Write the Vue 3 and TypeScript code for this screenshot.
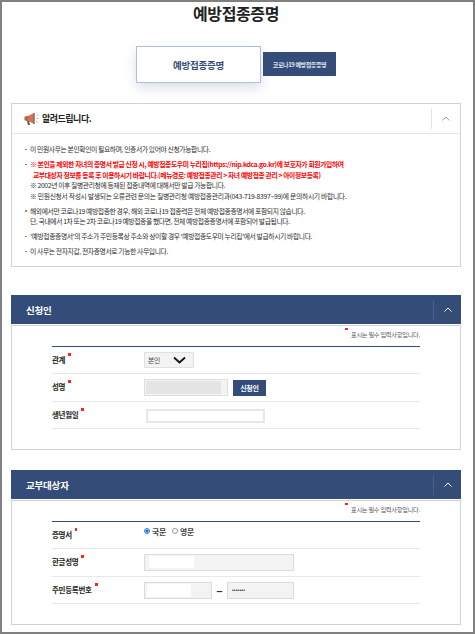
<script setup lang="ts">
interface NoticeLine { text: string; cls?: string }
const notices: NoticeLine[][] = [
  [{ text: '이 민원사무는 본인확인이 필요하며, 인증서가 있어야 신청가능합니다.' }],
  [
    { text: '※ 본인을 제외한 자녀의 증명서 발급 신청 시, 예방접종도우미 누리집(https://nip.kdca.go.kr)에 보호자가 회원가입하여', cls: 'red' },
    { text: '교부대상자 정보를 등록 후 이용하시기 바랍니다.(메뉴경로: 예방접종관리 > 자녀 예방접종 관리 > 아이정보등록)', cls: 'red ind' },
    { text: '※ 2002년 이후 질병관리청에 등재된 접종내역에 대해서만 발급 가능합니다.' },
    { text: '※ 민원신청서 작성시 발생되는 오류관련 문의는 질병관리청 예방접종관리과(043-719-8397~99)에 문의하시기 바랍니다.', cls: 'wide-line' },
  ],
  [
    { text: '해외에서만 코로나19 예방접종한 경우, 해외 코로나19 접종력은 전체 예방접종증명서에 포함되지 않습니다.' },
    { text: '단, 국내에서 1차 또는 2차 코로나19 예방접종을 했다면, 전체 예방접종증명서에 포함되어 발급됩니다.' },
  ],
  [{ text: "'예방접종증명서'의 주소가 주민등록상 주소와 상이할 경우 '예방접종도우미 누리집'에서 발급하시기 바랍니다." }],
  [{ text: '이 사무는 전자지갑, 전자증명서로 기능한 사무입니다.' }],
]
</script>

<template>
  <div class="page">
    <main class="content">
      <h1 class="title">예방접종증명</h1>
      <div class="tabs">
        <div class="tab active">예방접종증명</div>
        <div class="tab other">코로나19 예방접종증명</div>
      </div>

      <section class="notice">
        <header class="notice-head">
          <svg class="mega" viewBox="0 0 18 14" width="18" height="14">
            <path d="M4 4h3v5H4z" fill="#7d7d7d" />
            <path d="M2.500 4.500h2v4h-2z" fill="#c9553a" />
            <path d="M6 4l6-3v11L6 9z" fill="#e0704a" />
            <path d="M11.500 1h1.200v11h-1.200z" fill="#666" />
            <path d="M5 9h2l1 4H6z" fill="#555" />
            <path d="M14 3.500l2-1M14.500 6.500h2.500M14 9.500l2 1" stroke="#bbb" stroke-width="0.800" fill="none" />
          </svg>
          <span class="notice-title">알려드립니다.</span>
          <div class="notice-toggle">
            <svg viewBox="0 0 8 5" width="8" height="5"><path d="M0.500 4.500L4 1l3.500 3.500" fill="none" stroke="#8a8a8a" stroke-width="0.800" /></svg>
          </div>
        </header>
        <ul class="notice-list">
          <li v-for="(group, i) in notices" :key="i">
            <p v-for="(line, j) in group" :key="j" :class="line.cls">{{ line.text }}</p>
          </li>
        </ul>
      </section>

      <section class="panel first">
        <header class="panel-head">
          <span>신청인</span>
          <div class="panel-toggle">
            <svg viewBox="0 0 8 5" width="8" height="5"><path d="M0.500 4.500L4 1l3.500 3.500" fill="none" stroke="#fff" stroke-width="1" /></svg>
          </div>
        </header>
        <div class="panel-body">
          <p class="req-note"><i class="dot note-dot"></i>표시는 필수 입력사항입니다.</p>
          <div class="rows">
            <div class="row r1">
              <div class="label">관계<i class="dot"></i></div>
              <div class="fake-select">
                <span>본인</span>
                <svg viewBox="0 0 13 8" width="13" height="8"><path d="M1 1.500l5.500 5 5.500-5" fill="none" stroke="#111" stroke-width="1.800" /></svg>
              </div>
            </div>
            <div class="row r2">
              <div class="label">성명<i class="dot"></i></div>
              <div class="name-input"><span class="gray-fill"></span></div>
              <button class="btn" type="button">신청인</button>
            </div>
            <div class="row r3">
              <div class="label">생년월일<i class="dot wide"></i></div>
              <div class="birth-input"></div>
            </div>
          </div>
        </div>
      </section>

      <section class="panel second">
        <header class="panel-head">
          <span>교부대상자</span>
          <div class="panel-toggle">
            <svg viewBox="0 0 8 5" width="8" height="5"><path d="M0.500 4.500L4 1l3.500 3.500" fill="none" stroke="#fff" stroke-width="1" /></svg>
          </div>
        </header>
        <div class="panel-body">
          <p class="req-note"><i class="dot note-dot"></i>표시는 필수 입력사항입니다.</p>
          <div class="rows">
            <div class="row r1 cert">
              <div class="label">증명서<i class="dot"></i></div>
              <div class="radios">
                <span class="radio on"></span><span class="radio-text">국문</span>
                <span class="radio"></span><span class="radio-text">영문</span>
              </div>
            </div>
            <div class="row r2">
              <div class="label">한글성명<i class="dot wide"></i></div>
              <div class="text-input full"><span class="white-fill w45"></span></div>
            </div>
            <div class="row r3">
              <div class="label">주민등록번호<i class="dot wide"></i></div>
              <div class="text-input front"><span class="white-fill w44"></span></div>
              <span class="dash">–</span>
              <div class="text-input back"><span class="dots">•••••••</span></div>
            </div>
          </div>
        </div>
      </section>
    </main>
  </div>
</template>

<style scoped>
.page {
  width: 475px;
  height: 634px;
  box-sizing: border-box;
  border: 2px solid #808080;
  background: #fff;
  overflow: hidden;
  font-family: "Noto Sans CJK KR", "Noto Sans", sans-serif;
  color: #222;
}
.content {
  width: 450px;
  margin-left: 9px;
  display: flex;
  flex-direction: column;
}
.title {
  margin: 0;
  height: 23px;
  line-height: 23px;
  font-size: 16px;
  font-weight: 700;
  text-align: center;
  letter-spacing: -0.400px;
  color: #222;
}
.tabs {
  margin-top: 21px;
  height: 37px;
  display: flex;
  justify-content: center;
  align-items: center;
  gap: 2px;
}
.tab {
  box-sizing: border-box;
  display: flex;
  align-items: center;
  justify-content: center;
  white-space: nowrap;
}
.active {
  width: 125px;
  height: 37px;
  border: 1px solid #b0c0dc;
  background: #fff;
  box-shadow: 0 5px 12px rgba(60, 80, 130, 0.18);
  color: #334c78;
  font-size: 9.500px;
  font-weight: 700;
  letter-spacing: -0.200px;
}
.other {
  width: 73px;
  height: 24px;
  margin-top: -1px;
  background: #334c78;
  color: #dfe4ee;
  font-size: 6px;
  font-weight: 700;
  letter-spacing: -0.400px;
}
.notice {
  margin-top: 20px;
  height: 164px;
  box-sizing: border-box;
  border: 1px solid #d2d2d2;
}
.notice-head {
  height: 29px;
  border-bottom: 1px solid #e8e8e8;
  display: flex;
  align-items: center;
  padding-left: 10px;
}
.mega {
  flex: none;
}
.notice-title {
  margin-left: 2px;
  font-size: 9px;
  font-weight: 700;
  letter-spacing: -0.500px;
  color: #222;
}
.notice-toggle {
  margin-left: auto;
  width: 28px;
  height: 20px;
  border-left: 1px solid #e4e4e4;
  display: flex;
  align-items: center;
  justify-content: center;
}
.notice-list {
  margin: 0;
  padding: 10px 0 0 18px;
  list-style: none;
}
.notice-list li {
  position: relative;
  margin-bottom: 4.500px;
}
.notice-list li::before {
  content: "";
  position: absolute;
  left: -5px;
  top: 4.500px;
  width: 1.500px;
  height: 1.500px;
  background: #888;
}
.notice-list p {
  margin: 0;
  height: 10.500px;
  line-height: 10.500px;
  font-size: 6.800px;
  letter-spacing: -0.380px;
  color: #2a2a2a;
  white-space: nowrap;
}
.notice-list p.red {
  color: #f00;
  font-weight: 700;
}
.notice-list p.ind {
  padding-left: 3px;
}
.notice-list p.wide-line {
  letter-spacing: -0.300px;
}
.panel {
  display: flex;
  flex-direction: column;
}
.first {
  margin-top: 28px;
}
.second {
  margin-top: 20px;
}
.panel-head {
  height: 29px;
  background: #334c78;
  color: #fff;
  display: flex;
  align-items: center;
  padding-left: 15px;
  font-size: 9.500px;
  font-weight: 700;
  letter-spacing: -0.200px;
}
.panel-toggle {
  margin-left: auto;
  width: 27px;
  height: 20px;
  border-left: 1px solid #4a608a;
  display: flex;
  align-items: center;
  justify-content: center;
}
.panel-body {
  margin-top: 1px;
  height: 125px;
  box-sizing: border-box;
  border: 1px solid #d2d2d2;
  padding: 0 40px;
}
.req-note {
  margin: 0;
  height: 20px;
  line-height: 18px;
  text-align: right;
  font-size: 6.200px;
  letter-spacing: -0.250px;
  color: #555;
}
.note-dot {
  display: inline-block;
  vertical-align: 4px;
  margin-right: 3px;
}
.rows {
  border-top: 1px solid #334c78;
}
.row {
  box-sizing: border-box;
  border-bottom: 1px solid #e8e8e8;
  display: flex;
  align-items: center;
}
.r1 { height: 27px; }
.r2 { height: 28px; }
.r3 { height: 27px; }
.label {
  width: 92px;
  flex: none;
  font-size: 7.500px;
  font-weight: 700;
  letter-spacing: -0.300px;
  color: #222;
  align-self: flex-start;
  padding-top: 6px;
  line-height: 12px;
}
.dot {
  display: inline-block;
  width: 2.500px;
  height: 2.500px;
  background: #f22;
  margin-left: 3px;
  vertical-align: 7px;
}
.dot.wide {
  width: 3px;
}
.fake-select {
  box-sizing: border-box;
  width: 50px;
  height: 16px;
  background: #f3f3f3;
  border: 1px solid #e0e0e0;
  display: flex;
  align-items: center;
  padding: 0 7px 0 3px;
  justify-content: space-between;
  font-size: 6.800px;
  letter-spacing: -0.200px;
  color: #444;
}
.name-input {
  box-sizing: border-box;
  width: 84px;
  height: 17px;
  border: 1px solid #dedede;
  background: #f4f4f4;
  padding: 1px;
  display: flex;
}
.gray-fill {
  width: 75px;
  height: 100%;
  background: #e5e5e5;
}
.btn {
  margin-left: 5px;
  width: 33px;
  height: 16px;
  padding: 0;
  border: 0;
  background: #334c78;
  color: #fff;
  font: 700 7px "Noto Sans CJK KR", sans-serif;
  letter-spacing: -0.200px;
}
.birth-input {
  box-sizing: border-box;
  margin: 1px 0 0 2px;
  width: 119px;
  height: 14px;
  border: 2px solid #e6e6e6;
  background: #fff;
}
.radios {
  align-self: flex-start;
  margin-top: 3px;
  display: flex;
  align-items: center;
  height: 12px;
  font-size: 7.800px;
  font-weight: 700;
  letter-spacing: -0.200px;
  color: #444;
}
.radio {
  box-sizing: border-box;
  width: 6px;
  height: 6px;
  border-radius: 50%;
  border: 1px solid #999;
  background: #fff;
}
.radio.on {
  border: 1px solid #2a7be8;
  background: radial-gradient(circle, #0a6ce8 45%, #cfe3fb 60%);
}
.radio-text {
  margin: 0 6px 0 2px;
}
.text-input {
  box-sizing: border-box;
  height: 17px;
  border: 1px solid #dcdcdc;
  background: #f3f3f3;
  display: flex;
  align-items: center;
}
.full {
  width: 150px;
  padding-left: 4px;
}
.front {
  width: 68px;
  padding-left: 2px;
}
.back {
  width: 67px;
  padding-left: 4px;
}
.white-fill {
  height: 13px;
  background: #fff;
}
.w45 { width: 45px; height: 12px; margin-top: -2px; }
.w44 { width: 44px; }
.dash {
  width: 15px;
  line-height: 14px;
  text-align: center;
  font-size: 12px;
  font-weight: 700;
  color: #333;
}
.dots {
  font-size: 5.500px;
  letter-spacing: 0;
  color: #333;
}
</style>

<style>
html, body {
  margin: 0;
  background: #fff;
}
</style>
